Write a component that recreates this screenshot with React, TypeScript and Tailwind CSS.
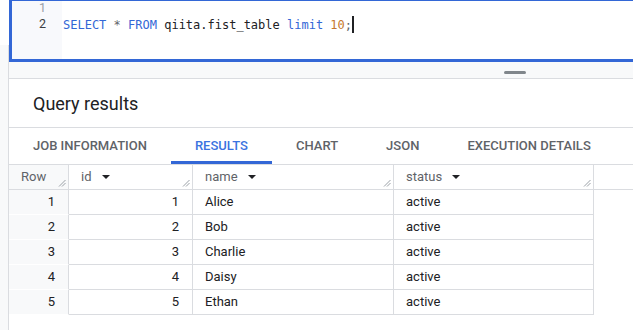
import React from "react";

const Resize = () => (
  <svg width="8" height="8" viewBox="0 0 8 8" className="absolute right-[2px] bottom-[2px]">
    <line x1="1" y1="7.5" x2="7.5" y2="1" stroke="#9aa0a6" strokeWidth="1" />
    <line x1="4" y1="7.5" x2="7.5" y2="4" stroke="#9aa0a6" strokeWidth="1" />
  </svg>
);

const Arrow = () => (
  <svg width="8" height="4" viewBox="0 0 8 4" className="ml-[10px]">
    <path d="M0 0 L8 0 L4 4 Z" fill="#202124" />
  </svg>
);

const rows = [
  [1, "Alice"],
  [2, "Bob"],
  [3, "Charlie"],
  [4, "Daisy"],
  [5, "Ethan"],
];

export default function App() {
  return (
    <div className="w-[633px] h-[330px] overflow-hidden bg-white flex font-['Roboto',sans-serif]">
      <div className="w-[9px] flex flex-col shrink-0">
        <div className="h-[45px]" />
        <div className="flex-1 bg-[#f8f9fa] border-r border-[#dadce0]" />
      </div>
      <div className="flex-1 flex flex-col min-w-0">
        {/* editor */}
        <div className="h-[64px] -mt-[2px] -mr-[6px] border-[3px] border-[#3367d6] flex overflow-hidden shrink-0">
          <div className="w-[50px] bg-[#f8f9fc] flex flex-col items-end pr-[16px] -mt-[1px] text-[12.5px] leading-[16px]">
            <div className="text-[#9aa0a6]">1</div>
            <div className="text-[#3c4043]">2</div>
          </div>
          <div className="flex-1 pl-[1px] -mt-[1px] font-['DejaVu_Sans_Mono',monospace] text-[12px] leading-[16px] whitespace-pre">
            <div>&nbsp;</div>
            <div className="flex items-center">
              <span className="text-[#3367d6]">SELECT</span>
              <span className="text-[#5f6368]"> * </span>
              <span className="text-[#3367d6]">FROM</span>
              <span className="text-[#202124]"> qiita.fist_table </span>
              <span className="text-[#3367d6]">limit</span>
              <span> </span>
              <span className="text-[#c5772e]">10</span>
              <span className="text-[#5f6368]">;</span>
              <span className="inline-block w-[2px] h-[17px] bg-[#202124]" />
            </div>
          </div>
        </div>
        {/* drag bar */}
        <div className="h-[17px] bg-[#f8f9fa] border-b border-[#dadce0] shrink-0 flex items-start pt-[9px] pl-[495px]">
          <div className="w-[22px] h-[3px] rounded-sm bg-[#80868b]" />
        </div>
        {/* title */}
        <div className="h-[49px] border-b border-[#dadce0] flex items-center pl-[24px] shrink-0">
          <span className="text-[18px] text-[#202124]">Query results</span>
        </div>
        {/* tabs */}
        <div className="h-[37px] border-b border-[#dadce0] flex shrink-0">
          {["JOB INFORMATION", "RESULTS", "CHART", "JSON", "EXECUTION DETAILS"].map((t) => (
            <div
              key={t}
              className={
                "px-[24px] flex items-center text-[13px] font-medium border-b-[3px] " +
                (t === "RESULTS" ? "border-[#3367d6] text-[#3a73e0]" : "border-transparent text-[#5f6368]")
              }
            >
              <span className="pt-[2px]">{t}</span>
            </div>
          ))}
        </div>
        {/* table */}
        <div className="text-[13px] text-[#202124]">
          <div className="flex h-[25px] border-b border-[#dadce0]">
            <div className="relative w-[60px] bg-[#f8f9fa] border-r border-[#dadce0] flex items-center pl-[12px] text-[#5f6368]">
              Row
              <Resize />
            </div>
            <div className="relative w-[124px] border-r border-[#dadce0] flex items-center pl-[12px] text-[#5f6368]">
              id
              <Arrow />
              <Resize />
            </div>
            <div className="relative w-[201px] border-r border-[#dadce0] flex items-center pl-[12px] text-[#5f6368]">
              name
              <Arrow />
              <Resize />
            </div>
            <div className="relative w-[200px] border-r border-[#dadce0] flex items-center pl-[12px] text-[#5f6368]">
              status
              <Arrow />
              <Resize />
            </div>
            <div className="flex-1" />
          </div>
          {rows.map(([n, name]) => (
            <div key={n} className="flex h-[25px]">
              <div className="w-[60px] bg-[#f8f9fa] border-b border-r border-b-white border-r-[#dadce0] flex items-center justify-end pr-[13px]">
                {n}
              </div>
              <div className="w-[124px] border-b border-r border-[#dadce0] flex items-center justify-end pr-[13px]">
                {n}
              </div>
              <div className="w-[201px] border-b border-r border-[#dadce0] flex items-center pl-[12px]">
                {name}
              </div>
              <div className="w-[200px] border-b border-r border-[#dadce0] flex items-center pl-[12px]">
                active
              </div>
            </div>
          ))}
        </div>
      </div>
    </div>
  );
}
